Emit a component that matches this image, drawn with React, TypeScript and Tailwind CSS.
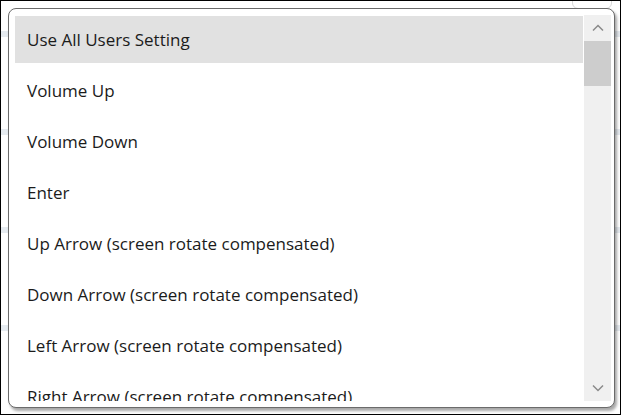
import React from "react";

const items = [
  "Use All Users Setting",
  "Volume Up",
  "Volume Down",
  "Enter",
  "Up Arrow (screen rotate compensated)",
  "Down Arrow (screen rotate compensated)",
  "Left Arrow (screen rotate compensated)",
  "Right Arrow (screen rotate compensated)",
];

export default function App() {
  return (
    <div className="relative w-[621px] h-[415px] bg-white overflow-hidden border border-black" style={{ fontFamily: '"Segoe UI", "Open Sans", "Noto Sans", sans-serif' }}>
      {/* background bands */}
      <div className="absolute left-0 top-[30px] w-full h-[6px] bg-[#e6ebf0]" />
      <div className="absolute left-0 top-[128px] w-full h-[6px] bg-[#e6ebf0]" />
      <div className="absolute left-0 top-[226px] w-full h-[6px] bg-[#e6ebf0]" />
      <div className="absolute left-0 top-[324px] w-full h-[6px] bg-[#e6ebf0]" />
      <div className="absolute right-[8px] top-[-10px] w-[40px] h-[18px] rounded-[6px] border border-[#d8d8d8] bg-white" />
      {/* popup */}
      <div className="absolute left-[7px] top-[7px] w-[607px] h-[400px] rounded-[8px] border border-[#6b6b6b] bg-white shadow-[2px_3px_3px_rgba(0,0,0,0.35)] flex px-[6px] pt-[5px] pb-[6px] pr-[3px]">
        <div className="flex-1 flex flex-col overflow-hidden">
          {items.map((t, i) => (
            <div key={i} className="h-[51px] shrink-0 py-[2px]">
              <div className={`h-full flex items-center pl-[12px] text-[17px] text-[#1b1b1b] ${i === 0 ? "bg-[#e1e1e1]" : ""}`}>
                {t}
              </div>
            </div>
          ))}
        </div>
        <div className="w-[27px] ml-[1px] mt-[1px] bg-[#f0f0f0] flex flex-col">
          <div className="h-[26px] flex items-center justify-center">
            <svg width="12" height="8" viewBox="0 0 12 8"><path d="M1 6.5 L6 1.5 L11 6.5" fill="none" stroke="#8a8a8a" strokeWidth="1.5" /></svg>
          </div>
          <div className="h-[45px] bg-[#cdcdcd]" />
          <div className="flex-1" />
          <div className="h-[26px] flex items-center justify-center">
            <svg width="12" height="8" viewBox="0 0 12 8"><path d="M1 1.5 L6 6.5 L11 1.5" fill="none" stroke="#8a8a8a" strokeWidth="1.5" /></svg>
          </div>
        </div>
      </div>
    </div>
  );
}
